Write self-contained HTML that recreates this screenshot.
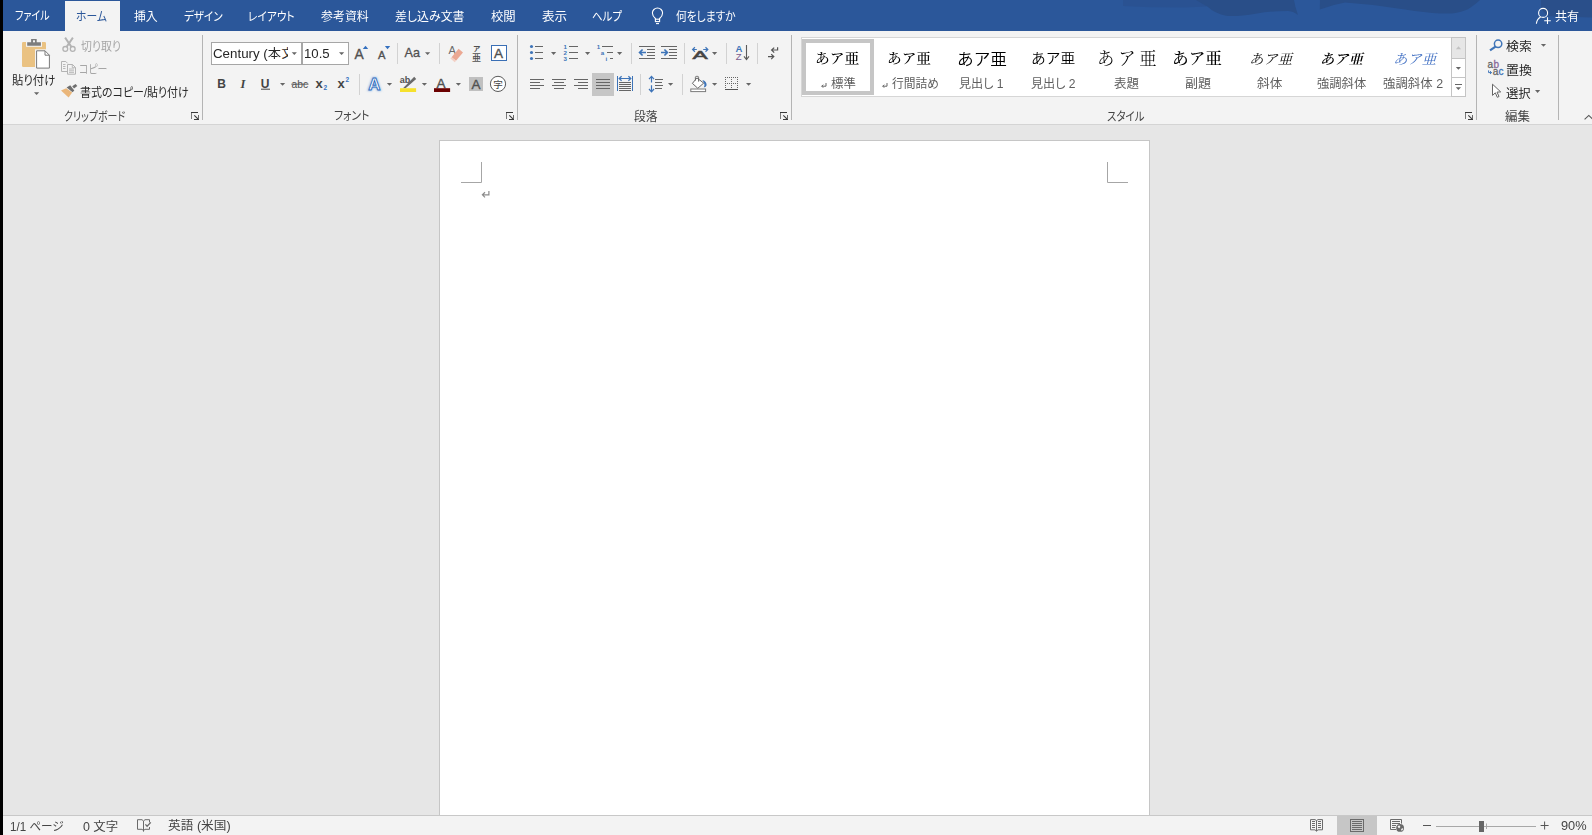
<!DOCTYPE html>
<html lang="ja"><head><meta charset="utf-8"><title>Word</title>
<style>
html,body{margin:0;padding:0}
body{width:1592px;height:835px;overflow:hidden;background:#e6e6e6;position:relative;font-family:"Liberation Sans","Noto Sans CJK JP",sans-serif;font-size:12px}
.abs,.t{position:absolute}
.t{white-space:nowrap;line-height:1;transform-origin:0 0}
#strip{left:0;top:0;width:3px;height:835px;background:#000}
#titlebar{left:3px;top:0;width:1589px;height:31px;background:#2b579a}
#tabhome{left:65px;top:1px;width:55px;height:30px;background:#f3f3f3}
#ribbon{left:3px;top:31px;width:1589px;height:93px;background:#f3f3f3;border-bottom:1px solid #d4d4d4}
.gsep{width:1px;top:35px;height:85px;background:#b4b4b4}
.ssep{width:1px;height:21px;background:#d2d2d2}
#fontname{left:211px;top:42px;width:91px;height:23px;background:#fff;border:1px solid #a6a6a6;box-sizing:border-box}
#fontsize{left:302px;top:42px;width:47px;height:23px;background:#fff;border:1px solid #a6a6a6;box-sizing:border-box}
#gallery{left:801px;top:37px;width:665px;height:60px;background:#fff;border:1px solid #d6d6d6;box-sizing:border-box}
#gsel{left:802px;top:39px;width:72px;height:56px;border:4px solid #c6c6c6;box-sizing:border-box;background:#fff}
#gup{left:1451px;top:37px;width:15px;height:22px;background:#e6e6e6;border:1px solid #c4c4c4;box-sizing:border-box}
#gdn{left:1451px;top:58px;width:15px;height:20px;background:#fff;border:1px solid #c4c4c4;box-sizing:border-box}
#gmore{left:1451px;top:77px;width:15px;height:20px;background:#fff;border:1px solid #c4c4c4;box-sizing:border-box}
#fnclip{left:281px;top:44px;width:6.6px;height:19px;overflow:hidden}
#fnclip span{position:absolute;left:0.6px;top:3.6px;line-height:1;font-size:12px;color:#262626;white-space:nowrap}
#justsel{left:592px;top:73px;width:22px;height:23px;background:#c6c6c6}
#doc{left:3px;top:125px;width:1589px;height:690px;background:#e6e6e6}
#page{left:439px;top:140px;width:711px;height:676px;background:#fff;border:1px solid #c6c6c6;box-sizing:border-box}
#status{left:3px;top:815px;width:1589px;height:20px;background:#f3f3f3;border-top:1px solid #c8c8c8;box-sizing:border-box}
#viewsel{left:1337px;top:816px;width:40px;height:19px;background:#c6c6c6}
svg#ico{position:absolute;left:0;top:0;width:1592px;height:835px;overflow:visible}
</style></head>
<body>
<div class="abs" id="doc"></div>
<div class="abs" id="page"></div>
<div class="abs" id="titlebar"></div>
<svg class="abs" id="deco" style="left:0;top:0" width="1592" height="31" viewBox="0 0 1592 31"><path d="M1123 0V6L1150 7.2L1185 7.4L1206 6.6L1212 0z" fill="#2a5292"/><path d="M1196 0L1208 7Q1214 13 1226 15.8Q1236 17 1257 13.4Q1272 11 1288 11Q1294 11.6 1298 15Q1295 7 1294 0z" fill="#294e88"/><path d="M1320 0L1319.8 9.4Q1332 5 1345 2.6Q1375 4.6 1405 9.4Q1425 12.6 1440 13.4H1452Q1462 12 1468 9.2Q1476 4 1480 0z" fill="#294e88"/><path d="M1541 0V7Q1543 13 1549 16.3L1592 17.6V0z" fill="#2a4f8a"/></svg>
<div class="abs" id="tabhome"></div>
<div class="abs" id="ribbon"></div>
<div class="abs gsep" style="left:202px"></div>
<div class="abs gsep" style="left:517px"></div>
<div class="abs gsep" style="left:791px"></div>
<div class="abs gsep" style="left:1476px"></div>
<div class="abs gsep" style="left:1558px"></div>
<div class="abs ssep" style="left:397px;top:43px"></div>
<div class="abs ssep" style="left:439px;top:43px"></div>
<div class="abs ssep" style="left:631px;top:43px"></div>
<div class="abs ssep" style="left:684px;top:43px"></div>
<div class="abs ssep" style="left:726px;top:43px"></div>
<div class="abs ssep" style="left:757px;top:43px"></div>
<div class="abs ssep" style="left:359px;top:74px"></div>
<div class="abs ssep" style="left:640px;top:74px"></div>
<div class="abs ssep" style="left:682px;top:74px"></div>
<div class="abs" id="fontname"></div><div class="abs" id="fontsize"></div>
<div class="abs" id="fnclip"><span>文のフォント)</span></div>
<div class="abs" id="gallery"></div><div class="abs" id="gsel"></div>
<div class="abs" id="gup"></div><div class="abs" id="gdn"></div><div class="abs" id="gmore"></div>
<div class="abs" id="justsel"></div>
<div class="abs" id="status"></div><div class="abs" id="viewsel"></div>
<div class="abs" id="strip"></div>
<svg id="ico" viewBox="0 0 1592 835">
<g id="i-paste"><rect x="22" y="42" width="24" height="25" rx="1.2" fill="#eac282"/><rect x="26" y="38.5" width="16" height="8.3" fill="#f3f3f3"/><path d="M27.2 42.3h3.9v-3.2h5.6v3.2h4.2v3.5h-13.7z" fill="#7d7d7d"/><rect x="33" y="40.3" width="2" height="2" fill="#f3f3f3"/><rect x="35" y="49.3" width="16" height="20.4" fill="#f3f3f3"/><path d="M36.6 50.8h8.4l4.4 4.4v12.9h-12.8z" fill="#fff" stroke="#7a7a7a" stroke-width="1"/><path d="M45 50.8v4.4h4.4" fill="none" stroke="#7a7a7a" stroke-width="1"/></g>
<path d="M34 92.3h5.2l-2.6 2.8z" fill="#666"/>
<g id="i-cut" fill="none" stroke="#b3b3b3" stroke-width="1.3"><circle cx="65.3" cy="48.9" r="2.4"/><circle cx="72.7" cy="48.9" r="2.4"/><path d="M66.6 46.9L72.9 37.6M71.4 46.9L65.1 37.6" stroke-width="1.9"/></g>
<g id="i-copy" fill="none" stroke="#b3b3b3" stroke-width="1"><path d="M67 71.5h-5.5v-10h4.3l1.8 1.8"/><path d="M63 64.5h2.5M63 66.5h2.5M63 68.5h2.5" stroke-width=".9"/><path d="M67.5 64.5h5l3 3v6.7h-8z" fill="#f3f3f3"/><path d="M72.3 64.5v3.2h3.2" stroke-width=".9"/><path d="M69 69h5M69 70.8h5M69 72.4h5" stroke-width=".9"/></g>
<g id="i-fmt"><path d="M61 90.6L66.2 88.3L72.2 92.6L68.6 97.6z" fill="#eab67a"/><path d="M66.6 87.6L70.2 85.2L74.3 90.6L72.6 92.2z" fill="#6e6e6e"/><path d="M72.2 86.2L75.6 83.9L77.3 86.1L74 88.6z" fill="#6e6e6e"/></g>
<path d="M191 112.5H198" stroke="#3a3a3a" stroke-width="1"/><path d="M191.5 113V119" stroke="#7a7a7a" stroke-width="1"/><path d="M194.3 115.3L198.2 119.2" stroke="#3a3a3a" stroke-width="1.1"/><path d="M194 119.5H199" stroke="#3a3a3a" stroke-width="1"/><path d="M198.5 115V119" stroke="#6a6a6a" stroke-width="1"/>
<path d="M291.7 52.3h5.2l-2.6 2.8z" fill="#666"/>
<path d="M339 52.3h5.2l-2.6 2.8z" fill="#666"/>
<text x="354.6" y="59" font-size="13.8" font-weight="400" fill="#505050" stroke="#505050" stroke-width="0.35" style="font-family:'Liberation Sans',sans-serif" >A</text>
<path d="M362.8 49.1h5.4l-2.7-3.3z" fill="#3470bf"/>
<text x="377.9" y="59" font-size="11.2" font-weight="400" fill="#505050" stroke="#505050" stroke-width="0.35" style="font-family:'Liberation Sans',sans-serif" >A</text>
<path d="M384.9 46h5.3l-2.65 3.2z" fill="#3470bf"/>
<text x="404.6" y="57" font-size="12.6" font-weight="400" fill="#505050" stroke="#505050" stroke-width="0.3" style="font-family:'Liberation Sans',sans-serif" >Aa</text>
<path d="M425 52.3h5.2l-2.6 2.8z" fill="#666"/>
<text x="448.6" y="54.2" font-size="11" font-weight="400" fill="#6a6a6a" style="font-family:'Liberation Sans',sans-serif" >A</text>
<path d="M451.6 57.2L458.6 48.8L463 52.4L456 60.8z" fill="#eba893"/><path d="M450.4 58.6L451.6 57.2L456 60.8L454.8 62.2z" fill="#f3cfc4"/>
<text x="473" y="51.4" font-size="7.4" font-weight="700" fill="#505050" style="font-family:'Liberation Sans','Noto Sans CJK JP',sans-serif">ア</text>
<text x="472" y="60.8" font-size="9" font-weight="500" fill="#505050" style="font-family:'Liberation Sans','Noto Sans CJK JP',sans-serif">亜</text>
<rect x="491.5" y="45.5" width="15" height="15" fill="#fff" stroke="#3a6fb5" stroke-width="1"/>
<text x="494.1" y="58.2" font-size="13.5" font-weight="400" fill="#505050" stroke="#505050" stroke-width="0.35" style="font-family:'Liberation Sans',sans-serif" >A</text>
<text x="217.3" y="87.8" font-size="12" font-weight="700" fill="#444" style="font-family:'Liberation Sans',sans-serif" >B</text>
<text x="240.6" y="87.8" font-size="12.5" font-weight="700" fill="#444" style="font-family:'Liberation Serif',serif" font-style="italic">I</text>
<text x="260.8" y="87.8" font-size="12" font-weight="700" fill="#444" style="font-family:'Liberation Sans',sans-serif" >U</text>
<path d="M261 89.2h9" stroke="#444" stroke-width="1"/>
<path d="M280 83h5.2l-2.6 2.8z" fill="#666"/>
<text x="291.6" y="87.6" font-size="10.5" font-weight="400" fill="#505050" style="font-family:'Liberation Sans',sans-serif" textLength="16.6" lengthAdjust="spacingAndGlyphs">abc</text>
<path d="M291.3 84.2h17.2" stroke="#505050" stroke-width=".9"/>
<text x="315.6" y="87.8" font-size="13" font-weight="700" fill="#444" style="font-family:'Liberation Sans',sans-serif" >x</text>
<text x="323.6" y="90.4" font-size="6.5" font-weight="700" fill="#3470bf" style="font-family:'Liberation Sans',sans-serif" >2</text>
<text x="337.6" y="87.8" font-size="13" font-weight="700" fill="#444" style="font-family:'Liberation Sans',sans-serif" >x</text>
<text x="345.6" y="82.4" font-size="6.5" font-weight="700" fill="#3470bf" style="font-family:'Liberation Sans',sans-serif" >2</text>
<defs><filter id="glow" x="-30%" y="-30%" width="160%" height="160%"><feGaussianBlur stdDeviation="0.9"/></filter></defs>
<text x="368.2" y="89.6" font-size="17" font-weight="700" fill="none" stroke="#9dbfea" stroke-width="2" filter="url(#glow)" style="font-family:'Liberation Sans',sans-serif">A</text>
<text x="368.2" y="89.6" font-size="17" font-weight="700" fill="#fff" stroke="#2f6cbd" stroke-width=".9" style="font-family:'Liberation Sans',sans-serif">A</text>
<path d="M386.9 82.9h5.2l-2.6 2.8z" fill="#666"/>
<text x="399.8" y="82.8" font-size="9" font-weight="700" fill="#505050" style="font-family:'Liberation Sans',sans-serif" >ab</text>
<path d="M403 88.2L405.6 88.2L416.2 78.9L414.2 76.7z" fill="#6a6a6a"/>
<path d="M409 80.6l2.2 2.2" stroke="#f3f3f3" stroke-width="0"/>
<rect x="400" y="88.2" width="16.1" height="3.8" fill="#f6e12d"/>
<path d="M421.8 82.9h5.2l-2.6 2.8z" fill="#666"/>
<text x="436.6" y="87.8" font-size="13.5" font-weight="400" fill="#505050" stroke="#505050" stroke-width="0.35" style="font-family:'Liberation Sans',sans-serif" >A</text>
<rect x="434" y="88.2" width="16.1" height="3.8" fill="#6b0000"/>
<path d="M455.8 82.9h5.2l-2.6 2.8z" fill="#666"/>
<rect x="469" y="77" width="14" height="14" fill="#c0c0c0"/>
<text x="471.5" y="89.3" font-size="13.5" font-weight="400" fill="#505050" stroke="#505050" stroke-width="0.35" style="font-family:'Liberation Sans',sans-serif" >A</text>
<circle cx="498" cy="83.9" r="7.6" fill="#fff" stroke="#5a5a5a" stroke-width="1"/>
<text x="493.2" y="87.6" font-size="9.6" fill="#444" style="font-family:'Liberation Sans','Noto Sans CJK JP',sans-serif">字</text>
<path d="M506 112.5H513" stroke="#3a3a3a" stroke-width="1"/><path d="M506.5 113V119" stroke="#7a7a7a" stroke-width="1"/><path d="M509.3 115.3L513.2 119.2" stroke="#3a3a3a" stroke-width="1.1"/><path d="M509 119.5H514" stroke="#3a3a3a" stroke-width="1"/><path d="M513.5 115V119" stroke="#6a6a6a" stroke-width="1"/>
<circle cx="531.5" cy="46.5" r="1.55" fill="#3e74b8"/>
<rect x="535" y="46" width="8" height="1" fill="#666"/>
<circle cx="531.5" cy="52.5" r="1.55" fill="#3e74b8"/>
<rect x="535" y="52" width="8" height="1" fill="#666"/>
<circle cx="531.5" cy="58.5" r="1.55" fill="#3e74b8"/>
<rect x="535" y="58" width="8" height="1" fill="#666"/>
<path d="M551 52.1h5.2l-2.6 2.8z" fill="#666"/>
<text x="563.6" y="48.6" font-size="6.2" font-weight="700" fill="#3e74b8" style="font-family:'Liberation Sans',sans-serif" >1</text>
<rect x="569" y="46" width="9" height="1" fill="#666"/>
<text x="563.6" y="54.6" font-size="6.2" font-weight="700" fill="#3e74b8" style="font-family:'Liberation Sans',sans-serif" >2</text>
<rect x="569" y="52" width="9" height="1" fill="#666"/>
<text x="563.6" y="60.6" font-size="6.2" font-weight="700" fill="#3e74b8" style="font-family:'Liberation Sans',sans-serif" >3</text>
<rect x="569" y="58" width="9" height="1" fill="#666"/>
<path d="M585 52.1h5.2l-2.6 2.8z" fill="#666"/>
<text x="596.8" y="49.2" font-size="6.2" font-weight="700" fill="#3e74b8" style="font-family:'Liberation Sans',sans-serif" >1</text>
<rect x="602" y="46" width="11" height="1" fill="#666"/>
<text x="600.8" y="55" font-size="6.2" font-weight="700" fill="#3e74b8" style="font-family:'Liberation Sans',sans-serif" >a</text>
<rect x="607" y="52" width="6" height="1" fill="#666"/>
<text x="605.6" y="61" font-size="6.2" font-weight="700" fill="#3e74b8" style="font-family:'Liberation Sans',sans-serif" >i</text>
<rect x="610" y="58" width="3" height="1" fill="#666"/>
<path d="M617 52.1h5.2l-2.6 2.8z" fill="#666"/>
<rect x="639" y="46" width="16" height="1" fill="#666"/>
<rect x="639" y="58" width="16" height="1" fill="#666"/>
<rect x="647" y="49" width="8" height="1" fill="#666"/>
<rect x="647" y="52" width="8" height="1" fill="#666"/>
<rect x="647" y="55" width="8" height="1" fill="#666"/>
<path d="M646 52.5H639.8M642.6 49.5L639.6 52.5L642.6 55.5" fill="none" stroke="#3e74b8" stroke-width="1.7"/>
<rect x="661" y="46" width="16" height="1" fill="#666"/>
<rect x="661" y="58" width="16" height="1" fill="#666"/>
<rect x="669" y="49" width="8" height="1" fill="#666"/>
<rect x="669" y="52" width="8" height="1" fill="#666"/>
<rect x="669" y="55" width="8" height="1" fill="#666"/>
<path d="M661 52.5H667.2M664.4 49.5L667.4 52.5L664.4 55.5" fill="none" stroke="#3e74b8" stroke-width="1.7"/>
<text x="0" y="0" font-size="11.4" font-weight="400" fill="#444" stroke="#444" stroke-width=".5" style="font-family:'Liberation Sans',sans-serif" transform="translate(692.4 58.9) scale(2.0 1)">A</text>
<path d="M696.8 49.5H692.8M694.9 47.3L692.6 49.5L694.9 51.7" fill="none" stroke="#3e74b8" stroke-width="1.2"/>
<path d="M703.2 49.5H707.6M705.5 47.3L707.8 49.5L705.5 51.7" fill="none" stroke="#3e74b8" stroke-width="1.2"/>
<path d="M712 52.1h5.2l-2.6 2.8z" fill="#666"/>
<text x="735.5" y="51.8" font-size="9.6" font-weight="700" fill="#3e74b8" style="font-family:'Liberation Sans',sans-serif" >A</text>
<text x="735.8" y="60.1" font-size="9.6" font-weight="400" fill="#7b5a8c" style="font-family:'Liberation Sans',sans-serif" >Z</text>
<path d="M746.5 45V59.4M744 56.4L746.5 59.6L749 56.4" fill="none" stroke="#5a5a5a" stroke-width="1.1"/>
<path d="M777.6 47.2V50H771.8M774.2 47.6L771.6 50L774.2 52.6" fill="none" stroke="#555" stroke-width="1.2"/><path d="M768 56.6H773.6M771.2 54.2L773.8 56.6L771.2 59.1" fill="none" stroke="#555" stroke-width="1.2"/>
<rect x="530" y="79" width="14" height="1" fill="#666"/>
<rect x="552" y="79" width="14" height="1" fill="#666"/>
<rect x="574" y="79" width="14" height="1" fill="#666"/>
<rect x="596" y="79" width="14" height="1" fill="#666"/>
<rect x="530" y="82" width="10" height="1" fill="#666"/>
<rect x="554" y="82" width="10" height="1" fill="#666"/>
<rect x="578" y="82" width="10" height="1" fill="#666"/>
<rect x="596" y="82" width="14" height="1" fill="#666"/>
<rect x="530" y="85" width="14" height="1" fill="#666"/>
<rect x="552" y="85" width="14" height="1" fill="#666"/>
<rect x="574" y="85" width="14" height="1" fill="#666"/>
<rect x="596" y="85" width="14" height="1" fill="#666"/>
<rect x="530" y="88" width="10" height="1" fill="#666"/>
<rect x="554" y="88" width="10" height="1" fill="#666"/>
<rect x="578" y="88" width="10" height="1" fill="#666"/>
<rect x="596" y="88" width="14" height="1" fill="#666"/>
<rect x="617" y="76" width="1" height="15" fill="#3e74b8"/>
<rect x="632" y="76" width="1" height="15" fill="#3e74b8"/>
<path d="M619.4 78.5H630.6M621.6 76.3L619.2 78.5L621.6 80.7M628.4 76.3L630.8 78.5L628.4 80.7" fill="none" stroke="#3e74b8" stroke-width="1.2"/>
<rect x="619" y="82" width="12" height="1" fill="#666"/>
<rect x="619" y="84" width="12" height="1" fill="#666"/>
<rect x="619" y="86" width="12" height="1" fill="#666"/>
<rect x="619" y="88" width="12" height="1" fill="#666"/>
<rect x="619" y="90" width="12" height="1" fill="#666"/>
<path d="M651.5 76.6V82.6M649 79.2L651.5 76.4L654 79.2M651.5 85.2V91.6M649 89L651.5 91.8L654 89" fill="none" stroke="#3e74b8" stroke-width="1.2"/>
<rect x="655" y="79" width="8" height="1" fill="#666"/>
<rect x="655" y="82" width="7" height="1" fill="#666"/>
<rect x="655" y="85" width="8" height="1" fill="#666"/>
<rect x="655" y="88" width="7" height="1" fill="#666"/>
<path d="M668 83h5.2l-2.6 2.8z" fill="#666"/>
<path d="M696.9 77.9L703.7 83.1L697.8 88.3L692.4 83.4z" fill="#fff" stroke="#666" stroke-width="1"/><path d="M695.4 80.6V77.4Q695.4 76.4 696.4 76.4H697.6Q698.6 76.4 698.6 77.4V81.6" fill="none" stroke="#666" stroke-width="1"/><path d="M702.4 79.9Q706.8 81 706.6 85.2Q706.2 87.2 703.8 87.6Q705.2 85 704 83.1z" fill="#3e74b8"/><rect x="690.8" y="89" width="14.8" height="2.6" fill="#fff" stroke="#7a7a7a" stroke-width="1"/>
<path d="M712 83h5.2l-2.6 2.8z" fill="#666"/>
<g fill="#666"><rect x="725" y="77" width="1" height="1"/><rect x="727" y="77" width="1" height="1"/><rect x="729" y="77" width="1" height="1"/><rect x="731" y="77" width="1" height="1"/><rect x="733" y="77" width="1" height="1"/><rect x="735" y="77" width="1" height="1"/><rect x="737" y="77" width="1" height="1"/><rect x="725" y="83" width="1" height="1"/><rect x="727" y="83" width="1" height="1"/><rect x="729" y="83" width="1" height="1"/><rect x="731" y="83" width="1" height="1"/><rect x="733" y="83" width="1" height="1"/><rect x="735" y="83" width="1" height="1"/><rect x="737" y="83" width="1" height="1"/><rect x="725" y="79" width="1" height="1"/><rect x="725" y="81" width="1" height="1"/><rect x="725" y="85" width="1" height="1"/><rect x="725" y="87" width="1" height="1"/><rect x="731" y="79" width="1" height="1"/><rect x="731" y="81" width="1" height="1"/><rect x="731" y="85" width="1" height="1"/><rect x="731" y="87" width="1" height="1"/><rect x="737" y="79" width="1" height="1"/><rect x="737" y="81" width="1" height="1"/><rect x="737" y="85" width="1" height="1"/><rect x="737" y="87" width="1" height="1"/></g>
<rect x="725" y="89" width="13" height="1" fill="#555"/>
<path d="M746 83h5.2l-2.6 2.8z" fill="#666"/>
<path d="M780 112.5H787" stroke="#3a3a3a" stroke-width="1"/><path d="M780.5 113V119" stroke="#7a7a7a" stroke-width="1"/><path d="M783.3 115.3L787.2 119.2" stroke="#3a3a3a" stroke-width="1.1"/><path d="M783 119.5H788" stroke="#3a3a3a" stroke-width="1"/><path d="M787.5 115V119" stroke="#6a6a6a" stroke-width="1"/>
<path d="M1455.9 49.2h5.2l-2.6-3z" fill="#c2c2c2"/>
<path d="M1455.8 67h5.2l-2.6 2.8z" fill="#666"/>
<rect x="1455" y="84" width="7" height="1" fill="#666"/>
<path d="M1455.8 87.3h5.2l-2.6 2.8z" fill="#666"/>
<path d="M1465 112.5H1472" stroke="#3a3a3a" stroke-width="1"/><path d="M1465.5 113V119" stroke="#7a7a7a" stroke-width="1"/><path d="M1468.3 115.3L1472.2 119.2" stroke="#3a3a3a" stroke-width="1.1"/><path d="M1468 119.5H1473" stroke="#3a3a3a" stroke-width="1"/><path d="M1472.5 115V119" stroke="#6a6a6a" stroke-width="1"/>
<path d="M826 83.0V86.19999999999999H821.8M823.2 84.69999999999999L821.7 86.19999999999999L823.2 87.69999999999999" fill="none" stroke="#666" stroke-width="1"/>
<path d="M887 83.0V86.19999999999999H882.8M884.2 84.69999999999999L882.7 86.19999999999999L884.2 87.69999999999999" fill="none" stroke="#666" stroke-width="1"/>
<circle cx="1498.1" cy="43.8" r="3.7" fill="none" stroke="#3e74b8" stroke-width="1.5"/><path d="M1495.5 46.6L1490 50.4" stroke="#3e74b8" stroke-width="2.2" stroke-linecap="butt"/>
<path d="M1540.9 44h5.2l-2.6 2.8z" fill="#666"/>
<text x="1487.6" y="67.6" font-size="10" font-weight="400" fill="#666" stroke="#666" stroke-width="0.3" style="font-family:'Liberation Sans',sans-serif" >a</text>
<text x="1493.4" y="67.6" font-size="10" font-weight="400" fill="#8a6a9a" stroke="#8a6a9a" stroke-width="0.3" style="font-family:'Liberation Sans',sans-serif" >b</text>
<text x="1492.8" y="74.8" font-size="10" font-weight="400" fill="#666" stroke="#666" stroke-width="0.3" style="font-family:'Liberation Sans',sans-serif" >a</text>
<text x="1498.6" y="74.8" font-size="10" font-weight="400" fill="#3e74b8" stroke="#3e74b8" stroke-width="0.3" style="font-family:'Liberation Sans',sans-serif" >c</text>
<path d="M1488.6 70.4V72.6H1491.4M1490 71.2L1491.6 72.6L1490 74" fill="none" stroke="#3e74b8" stroke-width="1"/>
<path d="M1492.5 84.2V95.4L1495.3 92.8L1497.3 97.3L1499 96.5L1497 92.1L1500.7 91.9z" fill="#fff" stroke="#666" stroke-width="1" stroke-linejoin="miter"/>
<path d="M1535 90.1h5.2l-2.6 2.8z" fill="#666"/>
<path d="M1584.6 119.4L1588.8 115.4L1593 119.4" fill="none" stroke="#555" stroke-width="1.1"/>
<g fill="none" stroke="#fff" stroke-width="1.1"><path d="M655.4 19.2V18.5Q652.4 16 652.4 13.1A5.1 5.1 0 0 1 662.6 13.1Q662.6 16 659.6 18.5V19.2"/><rect x="655.4" y="19.2" width="4.2" height="2.4"/><path d="M656 23.6H659"/></g>
<g fill="none" stroke="#fff" stroke-width="1.1"><circle cx="1543.1" cy="12.9" r="4.5"/><path d="M1536.4 23.8Q1536.8 19.2 1540.6 17"/><path d="M1544.2 20.7H1550.8M1547.5 17.2V24"/></g>
<path d="M481.5 162V182.5H461M1107.5 162V182.5H1128" fill="none" stroke="#a6a6a6" stroke-width="1"/>
<path d="M488.9 191V194.8H482.6M485 192.3L482.4 194.8L485 197.4" fill="none" stroke="#8c8c8c" stroke-width="1.2"/>
<g fill="none" stroke="#6a6a6a" stroke-width="1"><path d="M143.5 821L142 819.7H137.5V829.3H142L143.5 830.6"/><path d="M143.5 821L145 819.7H149.5V822.4M149.5 827V829.3H145L143.5 830.6"/><path d="M143.5 821V831.6"/><path d="M145.4 824.4L147.1 826.2L150.8 822.4" stroke-width="1.3"/></g>
<g fill="none" stroke="#6a6a6a" stroke-width="1"><path d="M1316.5 820.6L1315 819.6H1310.5V829.8H1315L1316.5 831.2L1318 829.8H1322.5V819.6H1318z"/><path d="M1316.5 820.6V831"/><path d="M1312 821.5h3M1312 823.5h3M1312 825.5h3M1312 827.5h3M1318 821.5h3M1318 823.5h3M1318 825.5h3M1318 827.5h3"/></g>
<rect x="1350.5" y="819.5" width="13" height="12" fill="none" stroke="#6a6a6a" stroke-width="1"/>
<rect x="1352" y="821" width="10" height="1" fill="#6a6a6a"/>
<rect x="1352" y="823" width="10" height="1" fill="#6a6a6a"/>
<rect x="1352" y="825" width="10" height="1" fill="#6a6a6a"/>
<rect x="1352" y="827" width="10" height="1" fill="#6a6a6a"/>
<rect x="1352" y="829" width="10" height="1" fill="#6a6a6a"/>
<g fill="none" stroke="#6a6a6a" stroke-width="1"><path d="M1396 829.5H1390.5V819.5H1401.5V823.6"/><path d="M1392 821.5h8M1392 823.5h8M1392 825.5h4M1392 827.5h3.4"/></g><circle cx="1400.1" cy="827.9" r="3.9" fill="#6a6a6a"/><path d="M1397.6 826.6q1.4-1.8 2.6-.6q.4 1.4-1 2.2q-1.4-.2-1.6-1.6zM1401 829.4q1.2-1.8 2.2-1q-.2 1.6-1.6 2.4z" fill="#f3f3f3"/>
<rect x="1423" y="825" width="8" height="1" fill="#555"/>
<rect x="1436" y="826" width="100" height="1" fill="#a8a8a8"/>
<rect x="1486" y="823.5" width="1" height="5.5" fill="#a8a8a8"/>
<rect x="1479" y="821" width="5" height="11" fill="#666"/>
<rect x="1540.6" y="825" width="8.0" height="1" fill="#555"/>
<rect x="1544.1" y="821.5" width="1" height="8.0" fill="#555"/>
</svg>
<span class="t" style="left:15.27px;top:9.85px;color:#fff;font-family:'Liberation Sans','Noto Sans CJK JP',sans-serif;font-size:12px;font-weight:400;font-feature-settings:'palt';transform:scale(0.8350,1.0000)">ファイル</span>
<span class="t" style="left:76.20px;top:10.85px;color:#2b579a;font-family:'Liberation Sans','Noto Sans CJK JP',sans-serif;font-size:12px;font-weight:400;font-feature-settings:'palt';transform:scale(0.9000,1.0000)">ホーム</span>
<span class="t" style="left:133.90px;top:10.85px;color:#fff;font-family:'Liberation Sans','Noto Sans CJK JP',sans-serif;font-size:12px;font-weight:400;font-feature-settings:'palt';transform:scale(0.9875,1.0000)">挿入</span>
<span class="t" style="left:183.82px;top:10.85px;color:#fff;font-family:'Liberation Sans','Noto Sans CJK JP',sans-serif;font-size:12px;font-weight:400;font-feature-settings:'palt';transform:scale(0.8767,1.0000)">デザイン</span>
<span class="t" style="left:248.42px;top:10.85px;color:#fff;font-family:'Liberation Sans','Noto Sans CJK JP',sans-serif;font-size:12px;font-weight:400;font-feature-settings:'palt';transform:scale(0.8918,1.0000)">レイアウト</span>
<span class="t" style="left:321.00px;top:10.85px;color:#fff;font-family:'Liberation Sans','Noto Sans CJK JP',sans-serif;font-size:12px;font-weight:400;font-feature-settings:'palt';transform:scale(0.9958,1.0000)">参考資料</span>
<span class="t" style="left:395.00px;top:10.85px;color:#fff;font-family:'Liberation Sans','Noto Sans CJK JP',sans-serif;font-size:12px;font-weight:400;font-feature-settings:'palt';transform:scale(0.9956,1.0000)">差し込み文書</span>
<span class="t" style="left:491.00px;top:10.85px;color:#fff;font-family:'Liberation Sans','Noto Sans CJK JP',sans-serif;font-size:12px;font-weight:400;font-feature-settings:'palt';transform:scale(1.0304,1.0000)">校閲</span>
<span class="t" style="left:541.90px;top:10.85px;color:#fff;font-family:'Liberation Sans','Noto Sans CJK JP',sans-serif;font-size:12px;font-weight:400;font-feature-settings:'palt';transform:scale(1.0478,1.0000)">表示</span>
<span class="t" style="left:591.83px;top:11.35px;color:#fff;font-family:'Liberation Sans','Noto Sans CJK JP',sans-serif;font-size:12px;font-weight:400;font-feature-settings:'palt';transform:scale(0.8735,1.0000)">ヘルプ</span>
<span class="t" style="left:676.11px;top:10.85px;color:#fff;font-family:'Liberation Sans','Noto Sans CJK JP',sans-serif;font-size:12px;font-weight:400;font-feature-settings:'palt';transform:scale(0.8939,1.0000)">何をしますか</span>
<span class="t" style="left:1555.20px;top:10.80px;color:#fff;font-family:'Liberation Sans','Noto Sans CJK JP',sans-serif;font-size:12px;font-weight:400;font-feature-settings:'palt';transform:scale(1.0043,1.0000)">共有</span>
<span class="t" style="left:12.05px;top:74.75px;color:#262626;font-family:'Liberation Sans','Noto Sans CJK JP',sans-serif;font-size:12px;font-weight:400;font-feature-settings:'palt';transform:scale(0.9477,1.0000)">貼り付け</span>
<span class="t" style="left:80.50px;top:40.80px;color:#a6a6a6;font-family:'Liberation Sans','Noto Sans CJK JP',sans-serif;font-size:12px;font-weight:400;font-feature-settings:'palt';transform:scale(0.9070,1.0000)">切り取り</span>
<span class="t" style="left:79.08px;top:64.15px;color:#a6a6a6;font-family:'Liberation Sans','Noto Sans CJK JP',sans-serif;font-size:12px;font-weight:400;font-feature-settings:'palt';transform:scale(0.8250,1.0000)">コピー</span>
<span class="t" style="left:79.59px;top:87.45px;color:#262626;font-family:'Liberation Sans','Noto Sans CJK JP',sans-serif;font-size:12px;font-weight:400;font-feature-settings:'palt';transform:scale(0.9137,1.0000)">書式のコピー/貼り付け</span>
<span class="t" style="left:63.97px;top:110.85px;color:#444;font-family:'Liberation Sans','Noto Sans CJK JP',sans-serif;font-size:12px;font-weight:400;font-feature-settings:'palt';transform:scale(0.8292,1.0000)">クリップボード</span>
<span class="t" style="left:334.40px;top:110.20px;color:#444;font-family:'Liberation Sans','Noto Sans CJK JP',sans-serif;font-size:12px;font-weight:400;font-feature-settings:'palt';transform:scale(0.9000,1.0000)">フォント</span>
<span class="t" style="left:634.40px;top:110.85px;color:#444;font-family:'Liberation Sans','Noto Sans CJK JP',sans-serif;font-size:12px;font-weight:400;font-feature-settings:'palt';transform:scale(0.9833,1.0000)">段落</span>
<span class="t" style="left:1106.73px;top:110.70px;color:#444;font-family:'Liberation Sans','Noto Sans CJK JP',sans-serif;font-size:12px;font-weight:400;font-feature-settings:'palt';transform:scale(0.8690,1.0000)">スタイル</span>
<span class="t" style="left:1505.00px;top:110.85px;color:#444;font-family:'Liberation Sans','Noto Sans CJK JP',sans-serif;font-size:12px;font-weight:400;font-feature-settings:'palt';transform:scale(1.0391,1.0000)">編集</span>
<span class="t" style="left:212.79px;top:47.85px;color:#262626;font-family:'Liberation Sans','Noto Sans CJK JP',sans-serif;font-size:12px;font-weight:400;font-feature-settings:'palt';transform:scale(1.1100,1.0000)">Century (本</span>
<span class="t" style="left:304.30px;top:48.00px;color:#262626;font-family:'Liberation Sans','Noto Sans CJK JP',sans-serif;font-size:12px;font-weight:400;font-feature-settings:'palt';transform:scale(1.1000,1.0000)">10.5</span>
<span class="t" style="left:831.00px;top:78.35px;color:#5e5e5e;font-family:'Liberation Sans','Noto Sans CJK JP',sans-serif;font-size:12px;font-weight:400;font-feature-settings:'palt';transform:scale(1.0348,1.0000)">標準</span>
<span class="t" style="left:892.00px;top:78.35px;color:#5e5e5e;font-family:'Liberation Sans','Noto Sans CJK JP',sans-serif;font-size:12px;font-weight:400;font-feature-settings:'palt';transform:scale(0.9766,1.0000)">行間詰め</span>
<span class="t" style="left:959.09px;top:78.35px;color:#5e5e5e;font-family:'Liberation Sans','Noto Sans CJK JP',sans-serif;font-size:12px;font-weight:400;font-feature-settings:'palt';transform:scale(1.0093,1.0000)">見出し 1</span>
<span class="t" style="left:1031.49px;top:78.35px;color:#5e5e5e;font-family:'Liberation Sans','Noto Sans CJK JP',sans-serif;font-size:12px;font-weight:400;font-feature-settings:'palt';transform:scale(1.0070,1.0000)">見出し 2</span>
<span class="t" style="left:1113.90px;top:78.35px;color:#5e5e5e;font-family:'Liberation Sans','Noto Sans CJK JP',sans-serif;font-size:12px;font-weight:400;font-feature-settings:'palt';transform:scale(1.0391,1.0000)">表題</span>
<span class="t" style="left:1185.11px;top:78.35px;color:#5e5e5e;font-family:'Liberation Sans','Noto Sans CJK JP',sans-serif;font-size:12px;font-weight:400;font-feature-settings:'palt';transform:scale(1.0864,1.0000)">副題</span>
<span class="t" style="left:1256.85px;top:78.35px;color:#5e5e5e;font-family:'Liberation Sans','Noto Sans CJK JP',sans-serif;font-size:12px;font-weight:400;font-feature-settings:'palt';transform:scale(1.0522,1.0000)">斜体</span>
<span class="t" style="left:1316.97px;top:78.35px;color:#5e5e5e;font-family:'Liberation Sans','Noto Sans CJK JP',sans-serif;font-size:12px;font-weight:400;font-feature-settings:'palt';transform:scale(1.0255,1.0000)">強調斜体</span>
<span class="t" style="left:1382.96px;top:78.35px;color:#5e5e5e;font-family:'Liberation Sans','Noto Sans CJK JP',sans-serif;font-size:12px;font-weight:400;font-feature-settings:'palt';transform:scale(1.0351,1.0000)">強調斜体 2</span>
<span class="t" style="left:815.39px;top:52.15px;color:#000;font-family:'Liberation Serif','Noto Serif CJK SC',serif;font-size:14px;font-weight:500;transform:scale(1.0538,1.0000)">あア亜</span>
<span class="t" style="left:887.30px;top:52.15px;color:#000;font-family:'Liberation Serif','Noto Serif CJK SC',serif;font-size:14px;font-weight:500;transform:scale(1.0487,1.0000)">あア亜</span>
<span class="t" style="left:956.52px;top:51.50px;color:#000;font-family:'Liberation Sans','Noto Sans CJK JP',sans-serif;font-size:16px;font-weight:350;transform:scale(1.0400,1.0000)">あア亜</span>
<span class="t" style="left:1031.20px;top:51.20px;color:#000;font-family:'Liberation Sans','Noto Sans CJK JP',sans-serif;font-size:14px;font-weight:350;transform:scale(1.0513,1.0000)">あア亜</span>
<span class="t" style="left:1096.67px;top:50.40px;color:#000;font-family:'Liberation Serif','Noto Serif CJK SC',serif;font-size:18px;font-weight:300;letter-spacing:4px;transform:scale(0.9627,1.0000)">あア亜</span>
<span class="t" style="left:1172.42px;top:51.20px;color:#000;font-family:'Liberation Serif','Noto Serif CJK SC',serif;font-size:16px;font-weight:500;transform:scale(1.0422,1.0000)">あア亜</span>
<span class="t" style="left:1248.65px;top:53.20px;color:#111;font-family:'Liberation Serif','Noto Serif CJK SC',serif;font-size:14px;font-weight:400;font-style:italic;transform:scale(1.0268,1.0000)">あア亜</span>
<span class="t" style="left:1320.36px;top:53.20px;color:#000;font-family:'Liberation Serif','Noto Serif CJK SC',serif;font-size:14px;font-weight:600;font-style:italic;transform:scale(1.0190,1.0000)">あア亜</span>
<span class="t" style="left:1392.64px;top:53.20px;color:#4472c4;font-family:'Liberation Serif','Noto Serif CJK SC',serif;font-size:14px;font-weight:400;font-style:italic;transform:scale(1.0293,1.0000)">あア亜</span>
<span class="t" style="left:1505.92px;top:41.30px;color:#262626;font-family:'Liberation Sans','Noto Sans CJK JP',sans-serif;font-size:12px;font-weight:400;font-feature-settings:'palt';transform:scale(1.0773,1.0000)">検索</span>
<span class="t" style="left:1505.92px;top:64.50px;color:#262626;font-family:'Liberation Sans','Noto Sans CJK JP',sans-serif;font-size:12px;font-weight:400;font-feature-settings:'palt';transform:scale(1.0773,1.0000)">置換</span>
<span class="t" style="left:1505.97px;top:87.55px;color:#262626;font-family:'Liberation Sans','Noto Sans CJK JP',sans-serif;font-size:12px;font-weight:400;font-feature-settings:'palt';transform:scale(1.0304,1.0000)">選択</span>
<span class="t" style="left:9.74px;top:821.05px;color:#444;font-family:'Liberation Sans','Noto Sans CJK JP',sans-serif;font-size:12px;font-weight:400;font-feature-settings:'palt';transform:scale(0.9648,1.0000)">1/1 ページ</span>
<span class="t" style="left:83.20px;top:821.05px;color:#444;font-family:'Liberation Sans','Noto Sans CJK JP',sans-serif;font-size:12px;font-weight:400;font-feature-settings:'palt';transform:scale(1.0364,1.0000)">0 文字</span>
<span class="t" style="left:168.44px;top:820.10px;color:#444;font-family:'Liberation Sans','Noto Sans CJK JP',sans-serif;font-size:12px;font-weight:400;font-feature-settings:'palt';transform:scale(1.0569,1.0000)">英語 (米国)</span>
<span class="t" style="left:1561.33px;top:819.95px;color:#444;font-family:'Liberation Sans','Noto Sans CJK JP',sans-serif;font-size:12px;font-weight:400;font-feature-settings:'palt';transform:scale(1.0652,1.0000)">90%</span>
</body></html>
